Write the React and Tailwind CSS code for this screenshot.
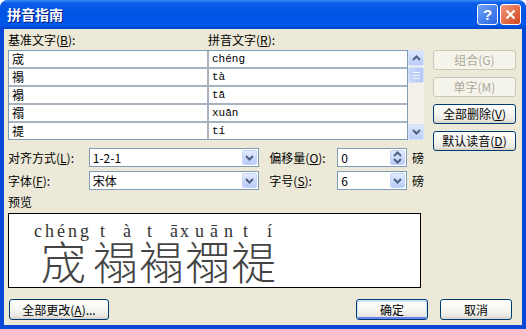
import React from 'react';

const rows = [
    ['宬', 'chéng'],
    ['禢', 'tà'],
    ['褟', 'tā'],
    ['禤', 'xuān'],
    ['禔', 'tí'],
];

// pinyin pieces as the preview spreads them (1-2-1)
const pinyin = [
    { s: 'chéng', c: 'w-[66px] tracking-[3px] ml-[25px]' },
    { s: 't', c: 'w-[23px]' },
    { s: 'à', c: 'w-[24px]' },
    { s: 't', c: 'w-[23px]' },
    { s: 'ā', c: 'w-[10px]' },
    { s: 'xuān', c: 'w-[63px] tracking-[6px]' },
    { s: 't', c: 'w-[24px]' },
    { s: 'í', c: 'w-[12px]' },
];

const chars = [
    { s: '宬', c: 'w-[52px] ml-[32px]' },
    { s: '禢', c: 'w-[46px]' },
    { s: '褟', c: 'w-[46px]' },
    { s: '禤', c: 'w-[46px]' },
    { s: '禔', c: 'w-[46px]' },
];

function Chevron({ up }) {
    return (
        <svg width="9" height="6" viewBox="0 0 9 6">
            <path d={up ? 'M1 5 L4.5 1.5 L8 5' : 'M1 1 L4.5 4.5 L8 1'} stroke="#4D6185" strokeWidth="2" fill="none" />
        </svg>
    );
}

function XpButton({ children, disabled, isDefault, className = '' }) {
    const base = 'h-[20px] rounded-[3px] border text-[12px] leading-none flex items-center justify-center';
    const look = disabled
        ? 'border-[#C9C7BA] bg-[#F5F4EA] text-[#ACA899]'
        : 'border-[#003C74] bg-[linear-gradient(to_bottom,#FFFFFF,#F4F4F0_55%,#E8E7E0_85%,#D6D0C5)] text-black';
    const ring = isDefault ? 'shadow-[inset_0_1px_0_1px_#CEE7FF,inset_0_-1px_0_1px_#6982EE]' : '';
    return <div className={`${base} ${look} ${ring} ${className}`}>{children}</div>;
}

function DropBtn({ spin }) {
    return (
        <div className="w-[15px] h-[15px] m-[1px] rounded-[2px] border border-[#C6D5FA] bg-[linear-gradient(to_bottom,#E2EBFE,#B8CBF8)] flex flex-col items-center justify-center gap-[1px]">
            {spin ? (
                <>
                    <Chevron up />
                    <Chevron />
                </>
            ) : (
                <Chevron />
            )}
        </div>
    );
}

function Combo({ value, className, spin }) {
    return (
        <div className={`h-[19px] border border-[#7F9DB9] bg-white flex items-center ${className}`}>
            <span className="flex-1 pl-[3px] text-[12px] leading-none">{value}</span>
            <DropBtn spin={spin} />
        </div>
    );
}

function ScrollBtn({ up }) {
    return (
        <div className="h-[16px] rounded-[2px] border border-[#D6E1FB] bg-[linear-gradient(to_bottom,#DCE6FD,#B9CCF7)] flex items-center justify-center">
            <Chevron up={up} />
        </div>
    );
}

export default function App() {
    return (
        <div className="w-[526px] h-[329px] bg-[#0A48DA] rounded-t-[8px] flex flex-col overflow-hidden font-['Noto_Sans_CJK_SC','Liberation_Sans',sans-serif] text-black">
            {/* Title bar */}
            <div className="h-[29px] shrink-0 flex items-center pl-[7px] pr-[5px] bg-[linear-gradient(to_bottom,#3D8CF5_0%,#0A5EEA_10%,#0054E3_45%,#0057E8_85%,#0044CC_100%)]">
                <span className="flex-1 text-white font-bold text-[14px] [text-shadow:1px_1px_0_#0A1E8C]">拼音指南</span>
                <div className="flex gap-[2px]">
                    <div className="w-[21px] h-[21px] rounded-[3px] border border-white bg-[linear-gradient(to_bottom_right,#6FA2F8,#2A66E3)] flex items-center justify-center text-white font-bold text-[15px] leading-none font-['Liberation_Sans',sans-serif]">?</div>
                    <div className="w-[21px] h-[21px] rounded-[3px] border border-white bg-[linear-gradient(to_bottom_right,#F29A7C,#D2451F)] flex items-center justify-center">
                        <svg width="11" height="11" viewBox="0 0 11 11">
                            <path d="M1.5 1.5 L9.5 9.5 M9.5 1.5 L1.5 9.5" stroke="white" strokeWidth="2" />
                        </svg>
                    </div>
                </div>
            </div>

            {/* Body */}
            <div className="flex-1 mx-[4px] mb-[4px] bg-[#ECE9D8] flex flex-col pl-[4px] text-[12px]">
                <div className="flex">
                    {/* Left column */}
                    <div className="w-[416px] flex flex-col">
                        <div className="flex mt-[4px] h-[14px] leading-[14px]">
                            <span className="w-[200px]">基准文字(<u>B</u>):</span>
                            <span>拼音文字(<u>R</u>):</span>
                        </div>
                        <div className="flex mt-[3px] h-[90px]">
                            <div className="w-[400px] border border-[#7F9DB9] bg-[#A9B3C0] grid grid-cols-[198px_198px] gap-[2px]">
                                {rows.map(([ch, py], i) => (
                                    <React.Fragment key={i}>
                                        <div className="h-[16px] bg-white pl-[3px] leading-[16px]">{ch}</div>
                                        <div className="h-[16px] bg-white pl-[3px] leading-[16px] font-['Liberation_Mono',monospace] text-[11px]">{py}</div>
                                    </React.Fragment>
                                ))}
                            </div>
                            <div className="w-[16px] bg-[#F3F1EA] flex flex-col">
                                <ScrollBtn up />
                                <div className="mt-[1px] h-[16px] rounded-[2px] border border-[#D6E1FB] bg-[linear-gradient(to_right,#C9D8FC,#B4C8F6)] flex flex-col items-center justify-center gap-[2px]">
                                    <div className="w-[7px] h-[1px] bg-[#EEF4FE]" />
                                    <div className="w-[7px] h-[1px] bg-[#EEF4FE]" />
                                    <div className="w-[7px] h-[1px] bg-[#EEF4FE]" />
                                </div>
                                <div className="flex-1" />
                                <ScrollBtn />
                            </div>
                        </div>

                        <div className="flex items-center mt-[8px]">
                            <span className="w-[81px]">对齐方式(<u>L</u>):</span>
                            <Combo value="1-2-1" className="w-[171px]" />
                            <span className="w-[78px] pl-[10px]">偏移量(<u>O</u>):</span>
                            <Combo value="0" className="w-[70px]" spin />
                            <span className="ml-[5px]">磅</span>
                        </div>
                        <div className="flex items-center mt-[4px]">
                            <span className="w-[81px]">字体(<u>F</u>):</span>
                            <Combo value="宋体" className="w-[171px]" />
                            <span className="w-[78px] pl-[10px]">字号(<u>S</u>):</span>
                            <Combo value="6" className="w-[70px]" />
                            <span className="ml-[5px]">磅</span>
                        </div>

                        <div className="mt-[5px] h-[14px] leading-[14px]">预览</div>
                        <div className="mt-[4px] w-[413px] h-[75px] border border-black bg-white flex flex-col overflow-hidden">
                            <div className="flex mt-[12px] h-[11px] leading-[11px] text-[18px] text-[#333] font-['Liberation_Serif',serif]">
                                {pinyin.map((p, i) => (
                                    <span key={i} className={`shrink-0 ${p.c}`}>{p.s}</span>
                                ))}
                            </div>
                            <div className="flex h-[48px] leading-[48px] text-[45px] text-[#444] font-light">
                                {chars.map((c, i) => (
                                    <span key={i} className={`shrink-0 ${c.c}`}>{c.s}</span>
                                ))}
                            </div>
                        </div>
                    </div>

                    {/* Right column */}
                    <div className="ml-[9px] w-[83px] mt-[21px] flex flex-col gap-[7px]">
                        <XpButton disabled>组合(G)</XpButton>
                        <XpButton disabled>单字(M)</XpButton>
                        <XpButton>全部删除(<u>V</u>)</XpButton>
                        <XpButton>默认读音(<u>D</u>)</XpButton>
                    </div>
                </div>

                {/* Bottom buttons */}
                <div className="flex mt-[11px] pr-[10px]">
                    <XpButton className="w-[100px] ml-[1px] h-[21px]">全部更改(<u>A</u>)...</XpButton>
                    <div className="flex-1" />
                    <XpButton isDefault className="w-[72px] h-[21px]">确定</XpButton>
                    <XpButton className="w-[72px] h-[21px] ml-[12px]">取消</XpButton>
                </div>
            </div>
        </div>
    );
}
